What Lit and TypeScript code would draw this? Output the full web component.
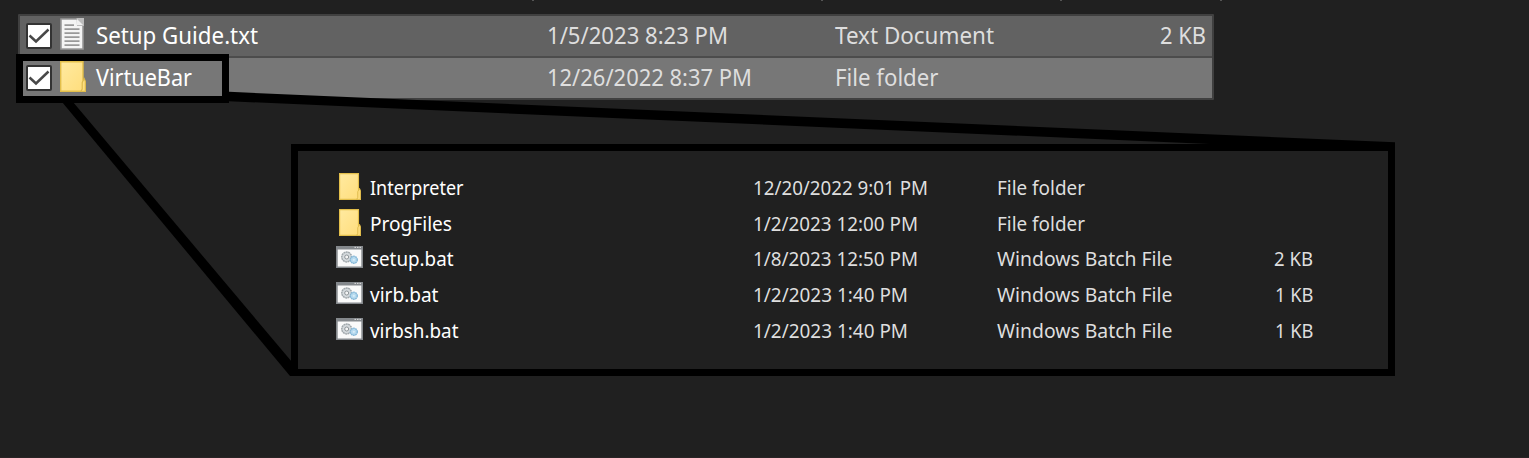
import { LitElement, html, svg, css } from "lit";
import { customElement, property } from "lit/decorators.js";

type Kind = "text" | "folder" | "batch";
// A label with the width its column text occupies.
type Label = [string, number];
interface Entry {
  kind: Kind;
  name: Label;
  date: Label;
  type: Label;
  size?: Label;
}

const SELECTED: Entry[] = [
  { kind: "text", name: ["Setup Guide.txt", 162], date: ["1/5/2023 8:23 PM", 181], type: ["Text Document", 159], size: ["2 KB", 46] },
  { kind: "folder", name: ["VirtueBar", 96], date: ["12/26/2022 8:37 PM", 205], type: ["File folder", 103.5] },
];

const CONTENTS: Entry[] = [
  { kind: "folder", name: ["Interpreter", 93.5], date: ["12/20/2022 9:01 PM", 175], type: ["File folder", 88] },
  { kind: "folder", name: ["ProgFiles", 82], date: ["1/2/2023 12:00 PM", 165], type: ["File folder", 88] },
  { kind: "batch", name: ["setup.bat", 83.5], date: ["1/8/2023 12:50 PM", 165], type: ["Windows Batch File", 175.5], size: ["2 KB", 39] },
  { kind: "batch", name: ["virb.bat", 68.5], date: ["1/2/2023 1:40 PM", 155], type: ["Windows Batch File", 175.5], size: ["1 KB", 38.5] },
  { kind: "batch", name: ["virbsh.bat", 88.5], date: ["1/2/2023 1:40 PM", 155], type: ["Windows Batch File", 175.5], size: ["1 KB", 38.5] },
];

@customElement("file-icon")
class FileIcon extends LitElement {
  @property() kind: Kind = "folder";

  static styles = css`
    :host { display: block; line-height: 0; }
    .text { width: 24px; height: 32px; }
    .folder { width: 100%; height: 100%; }
    .batch { width: 27px; height: 22px; }
  `;

  render() {
    if (this.kind === "text") {
      return html`<svg class="text" viewBox="0 0 24 32">
        <path d="M1 1H17L23 7V31H1Z" fill="#f4f4f4" stroke="#999" stroke-width="1.6" />
        <path d="M16.5 0H24V8H17Z" fill="#bcbcbc" />
        <path d="M17 1L23 7H17Z" fill="#f0f0f0" />
        <path d="M4.5 7.2H14M4.5 11.2H19.5M4.5 15.2H19.5M4.5 19.2H19.5M4.5 23.2H19.5M4.5 27.2H19.5" stroke="#999" stroke-width="1.7" />
      </svg>`;
    }
    if (this.kind === "folder") {
      return html`<svg class="folder" viewBox="0 0 26 31" preserveAspectRatio="none">
        <defs><linearGradient id="g" x1="0" y1="0" x2="1" y2="1">
          <stop offset="0" stop-color="#ffeaa0" /><stop offset="1" stop-color="#ffdd7b" />
        </linearGradient></defs>
        <path d="M.7 .7H23V19L25.3 21V30.3H.7Z" fill="url(#g)" stroke="#e3bf4b" stroke-width="1.4" />
        <path d="M24.2 17.5L22.2 21.5V28L21 30.3H25.3V20Z" fill="#ffdf80" stroke="#dcb849" stroke-width="1.1" />
      </svg>`;
    }
    return html`<svg class="batch" viewBox="0 0 27 22">
      <rect width="27" height="22" fill="#84888c" />
      <rect x="1.7" y="3.5" width="23.6" height="17" fill="#fafafa" />
      <path d="M18.5 1.4H20M21 1.4H22.5M23.5 1.4H25" stroke="#dedede" stroke-width="1" />
      <circle cx="10.7" cy="11" r="4.9" fill="#d5dadd" stroke="#a0a7ab" stroke-width="1.5" stroke-dasharray="1.9 .5" />
      <circle cx="10.7" cy="11" r="2" fill="#f4f4f4" stroke="#848c91" stroke-width=".9" />
      <circle cx="17.8" cy="13.8" r="3.5" fill="#b6daef" stroke="#86b8d8" stroke-width="1.4" stroke-dasharray="1.7 .5" />
      <circle cx="17.8" cy="13.8" r="1.1" fill="#d8edf8" />
    </svg>`;
  }
}

@customElement("file-row")
class FileRow extends LitElement {
  @property({ attribute: false }) entry!: Entry;
  @property({ type: Boolean, reflect: true }) selected = false;

  static styles = css`
    :host {
      display: grid;
      grid-template-columns: 33.5px 383px 244.5px 218px 98px;
      height: 35.75px;
      align-items: center;
      --font: 20.3px;
    }
    :host([selected]) {
      grid-template-columns: 39px 37px 451px 287.5px 273px 98.5px;
      height: 40px;
      --font: 24px;
    }
    .label { display: block; height: 34px; overflow: visible; }
    .label text {
      font-family: "Noto Sans", "Open Sans", sans-serif;
      font-size: var(--font);
      fill: #dedede;
    }
    .name text { fill: #fff; }
    .size { justify-self: end; }
    .check { width: 26px; height: 26px; display: block; margin-left: 6px; }
    .text { width: 24px; height: 32px; margin: 0 0 4px 1px; }
    .folder { width: 22px; height: 27px; margin: 0 0 2px 3px; }
    .batch { width: 27px; height: 22px; margin-bottom: 4px; }
    :host([selected]) .folder { width: 26px; height: 31px; margin: 0 0 3px 1px; }
  `;

  private label(value: Label | undefined, cls: string) {
    if (!value) return html`<span></span>`;
    const [text, width] = value;
    return html`<svg class="label ${cls}" width=${width} height="34">
      ${svg`<text x="0" y=${this.selected ? 25 : 23.6} textLength=${width} lengthAdjust="spacingAndGlyphs">${text}</text>`}
    </svg>`;
  }

  render() {
    const e = this.entry;
    return html`
      ${this.selected
        ? html`<svg class="check" viewBox="0 0 26 26">
            <rect x="1" y="1" width="24" height="24" rx="1" fill="#fff" stroke="#333" stroke-width="2" />
            <path d="M3.5 12.5L10 18.5L22.5 6.5" fill="none" stroke="#484848" stroke-width="2.5" />
          </svg>`
        : ""}
      <file-icon class=${e.kind} .kind=${e.kind}></file-icon>
      ${this.label(e.name, "name")} ${this.label(e.date, "date")}
      ${this.label(e.type, "type")} ${this.label(e.size, "size")}
    `;
  }
}

@customElement("app-root")
class AppRoot extends LitElement {
  static styles = css`
    :host {
      display: block;
      position: relative;
      box-sizing: border-box;
      width: 1529px;
      height: 458px;
      padding: 14px 0 0 18px;
      overflow: hidden;
      background: #202020;
    }
    .selection {
      box-sizing: border-box;
      width: 1196px;
      height: 86px;
      border: 2px solid #404040;
      border-radius: 1px;
      background: #626262;
    }
    .selection file-row + file-row { border-top: 2px solid #4c4c4c; background: #777; }
    .contents {
      box-sizing: border-box;
      width: 1104px;
      height: 232px;
      margin: 44px 0 0 273px;
      padding: 19px 0 0 38px;
      border: 7px solid #000;
    }
    .callout { position: absolute; inset: 0; pointer-events: none; }
  `;

  render() {
    return html`
      <div class="selection">${SELECTED.map((e) => html`<file-row selected .entry=${e}></file-row>`)}</div>
      <div class="contents">${CONTENTS.map((e) => html`<file-row .entry=${e}></file-row>`)}</div>
      <svg class="callout" width="1529" height="458">
        <rect x="19.5" y="57.5" width="206" height="42" fill="none" stroke="#000" stroke-width="7" />
        <path d="M229 91.8L1395 142.3V151H1370L229 101.2Z" />
        <path d="M62 102H73L292 362L298 376H290Z" />
        <path d="M532 .5H534M821 .5H823M1060 .5H1062M1220 .5H1222" stroke="#555" />
        <path d="M0 457.5H1529" stroke="#292425" />
      </svg>
    `;
  }
}
